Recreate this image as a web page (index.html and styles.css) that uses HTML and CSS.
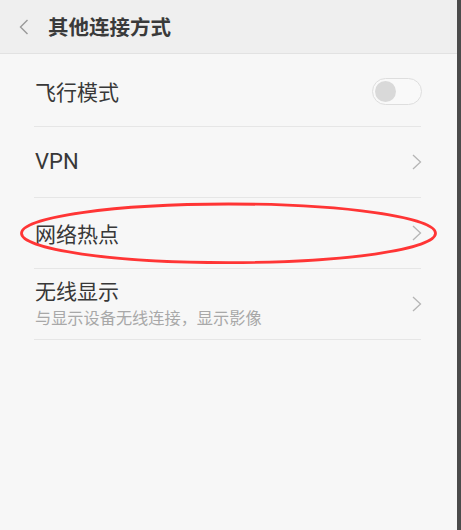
FILE: index.html
```html
<!DOCTYPE html>
<html lang="zh">
<head>
<meta charset="utf-8">
<link rel="stylesheet" href="styles.css">
</head>
<body>
<div class="frame">
  <div class="screen">
    <header class="topbar">
      <svg class="back" width="10" height="16" viewBox="0 0 10 16"><path d="M8.5 1 L1.5 8 L8.5 15" fill="none" stroke="#9a9a9a" stroke-width="1.4"/></svg>
      <h1 class="title">其他连接方式</h1>
    </header>
    <ul class="list">
      <li class="row">
        <span class="label">飞行模式</span>
        <span class="switch"><span class="knob"></span></span>
      </li>
      <li class="row">
        <span class="label latin">VPN</span>
        <svg class="chev" width="10" height="16" viewBox="0 0 10 16"><path d="M1 1 L8.5 8 L1 15" fill="none" stroke="#b5b5b5" stroke-width="1.3"/></svg>
      </li>
      <li class="row">
        <span class="label">网络热点</span>
        <svg class="chev" width="10" height="16" viewBox="0 0 10 16"><path d="M1 1 L8.5 8 L1 15" fill="none" stroke="#b5b5b5" stroke-width="1.3"/></svg>
      </li>
      <li class="row">
        <span class="stack">
          <span class="label">无线显示</span>
          <span class="sub">与显示设备无线连接，显示影像</span>
        </span>
        <svg class="chev" width="10" height="16" viewBox="0 0 10 16"><path d="M1 1 L8.5 8 L1 15" fill="none" stroke="#b5b5b5" stroke-width="1.3"/></svg>
      </li>
    </ul>
    <svg class="mark" width="461" height="530" viewBox="0 0 461 530"><ellipse cx="228.5" cy="233.3" rx="207" ry="29.3" fill="none" stroke="#ff3535" stroke-width="2.8"/></svg>
  </div>
  <div class="strip"></div>
</div>
</body>
</html>
```
FILE: styles.css
```css
html, body {
  margin: 0;
  padding: 0;
  height: 100%;
}
body {
  font-family: "Noto Sans CJK SC", "Noto Sans", sans-serif;
  background: #f7f7f7;
}
.frame {
  display: flex;
  height: 530px;
  width: 461px;
  overflow: hidden;
}
.screen {
  width: 457px;
  background: #f7f7f7;
}
.strip {
  flex: 1;
  background: #4b4b4b;
}
.topbar {
  height: 53px;
  background: #efefef;
  border-bottom: 1px solid #e2e2e2;
  display: flex;
  align-items: center;
  padding-left: 19px;
}
.back {
  display: block;
  margin-right: 19px;
  margin-top: 1px;
}
.title {
  margin: 0;
  font-size: 20.5px;
  font-weight: 700;
  color: #3a3a3a;
  line-height: 1;
}
.list {
  list-style: none;
  margin: 0;
  padding: 2px 36px 0 34px;
}
.row {
  height: 70px;
  border-bottom: 1px solid #e6e6e6;
  display: flex;
  align-items: center;
  justify-content: space-between;
  padding-left: 1px;
}
.label {
  font-size: 21px;
  color: #383838;
  line-height: 1;
}
.latin {
  font-family: Roboto, "Noto Sans", sans-serif;
  font-size: 22px;
  font-weight: 400;
}
.stack {
  display: flex;
  flex-direction: column;
  gap: 8px;
  margin-top: -3px;
}
.sub {
  font-size: 16.2px;
  color: #a8a8a8;
  line-height: 1;
}
.chev {
  display: block;
  margin-right: -1px;
}
.switch {
  width: 46px;
  height: 25px;
  border: 1px solid #dedede;
  border-radius: 14px;
  background: #f9f9f9;
  margin-right: -1px;
  display: flex;
  align-items: center;
  padding-left: 2px;
}
.knob {
  width: 21px;
  height: 21px;
  border-radius: 50%;
  background: #d9d9d9;
}
.mark {
  position: absolute;
  left: 0;
  top: 0;
  pointer-events: none;
}
```
